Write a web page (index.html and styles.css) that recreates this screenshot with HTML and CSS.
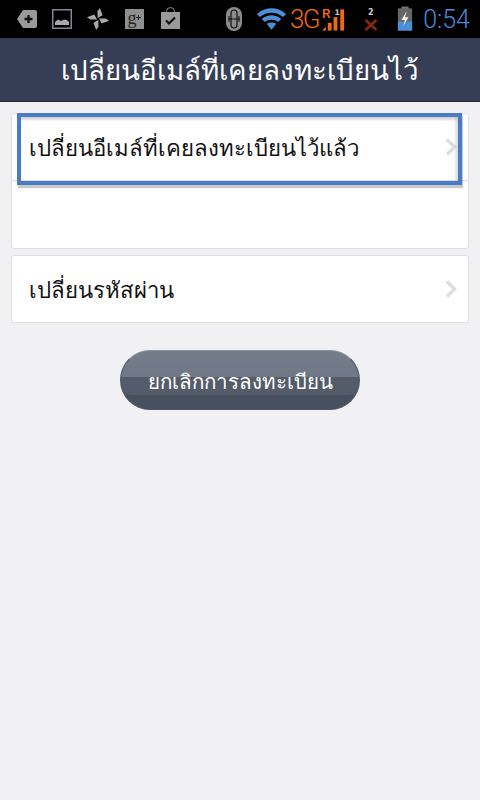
FILE: index.html
```html
<!DOCTYPE html>
<html lang="th">
<head>
<meta charset="utf-8">
<title>เปลี่ยนอีเมล์</title>
<link rel="stylesheet" href="styles.css">
</head>
<body>
<div class="status">
  <div class="status-left">
    <svg class="i" width="20" height="18" viewBox="0 0 20 18"><path d="M6 0h12a2 2 0 0 1 2 2v14a2 2 0 0 1-2 2H6L0 9z" fill="#9a9a9a"/><path d="M11.500 5v8M7.500 9h8" stroke="#111" stroke-width="2.400"/></svg>
    <svg class="i" width="20" height="20" viewBox="0 0 20 20"><rect x=".75" y=".75" width="18.500" height="18.500" fill="none" stroke="#7d8798" stroke-width="1.500"/><path d="M3 16v-3l3-2.500 3 1.500 3-1.500 3 .5 2 2v3z" fill="#a8a8a8"/></svg>
    <svg class="i pin" width="22" height="24" viewBox="0 0 24 24"><g fill="#a8a8a8"><path d="M11.500 11V3.500L14 0l3 8z"/><path d="M11.500 11V3.500L14 0l3 8z" transform="rotate(90 12 12)"/><path d="M11.500 11V3.500L14 0l3 8z" transform="rotate(180 12 12)"/><path d="M11.500 11V3.500L14 0l3 8z" transform="rotate(270 12 12)"/></g></svg>
    <svg class="i gp" width="19" height="20" viewBox="0 0 19 20"><rect width="19" height="20" fill="#8f8f8f"/><text x="2.500" y="15" class="gplus">g</text><path d="M13.500 6v5M11 8.500h5" stroke="#222" stroke-width="1"/></svg>
    <svg class="i bag" width="19" height="22" viewBox="0 0 19 22"><path d="M5.500 7V4.500a4 4 0 0 1 8 0V7" fill="none" stroke="#8a8a8a" stroke-width="1"/><rect y="5" width="19" height="17" fill="#9a9a9a"/><path d="M5 13.500l3 3 6-6" fill="none" stroke="#111" stroke-width="2.200"/></svg>
  </div>
  <div class="status-right">
    <svg class="i" width="18" height="26" viewBox="0 0 18 26"><rect x="1" y="1" width="16" height="24" rx="8" fill="#8c8c8c"/><rect x="6" y="4" width="6" height="18" rx="3" fill="none" stroke="#111" stroke-width="1.200"/><path d="M3 13h12M4 10v6M14 10v6" stroke="#111" stroke-width="1"/></svg>
    <svg class="i wifi" width="31" height="24" viewBox="0 0 32 24"><path d="M1 7C9-1 23-1 31 7l-3 3C21 4 11 4 4 10z" fill="#4a8fd8"/><path d="M6 12c6-5 14-5 20 0l-3 3c-4-3-10-3-14 0z" fill="#4a8fd8"/><path d="M11 17c3-2 7-2 10 0l-5 6z" fill="#4a8fd8"/></svg>
    <span class="net">3G</span>
    <svg class="i sig" width="25" height="26" viewBox="0 0 26 26"><text x="0" y="12" class="r">R</text><text x="13" y="9" class="one">1</text><g fill="#f26a0f"><path d="M0 25l4-4v4z"/><rect x="6" y="17" width="4" height="8"/><rect x="12" y="11" width="4" height="14"/><rect x="19" y="3" width="4" height="22"/></g></svg>
    <svg class="i alarm" width="14" height="26" viewBox="0 0 14 26"><text x="4" y="9" class="two">2</text><path d="M1.500 14l11 10M12.500 14L1.500 24" stroke="#8b2a0c" stroke-width="2.500"/></svg>
    <svg class="i batt" width="16" height="26" viewBox="0 0 18 28"><rect x="5" y="0" width="8" height="3" fill="#777"/><rect x="1" y="2" width="16" height="25" fill="#666"/><rect x="1" y="17" width="16" height="10" fill="#4a8fd8"/><path d="M11 5L5 15h4l-2 7 6-10H9z" fill="#f4f4f4"/></svg>
    <span class="clock">0:54</span>
  </div>
</div>
<header class="title"><h1>เปลี่ยนอีเมล์ที่เคยลงทะเบียนไว้</h1></header>
<main class="content">
  <section class="card first">
    <div class="row">
      <span>เปลี่ยนอีเมล์ที่เคยลงทะเบียนไว้แล้ว</span>
      <svg class="chev" width="12" height="18" viewBox="0 0 12 18"><path d="M2 1.500l7.500 7.500L2 16.500" fill="none" stroke="#dcdde0" stroke-width="3.500"/></svg>
    </div>
    <div class="empty"></div>
    <div class="focus"></div>
  </section>
  <section class="card">
    <div class="row">
      <span>เปลี่ยนรหัสผ่าน</span>
      <svg class="chev" width="12" height="18" viewBox="0 0 12 18"><path d="M2 1.500l7.500 7.500L2 16.500" fill="none" stroke="#dcdde0" stroke-width="3.500"/></svg>
    </div>
  </section>
  <button class="cancel">ยกเลิกการลงทะเบียน</button>
</main>
</body>
</html>
```
FILE: styles.css
```css
* { box-sizing: border-box; }
html, body { margin: 0; padding: 0; }
body {
  width: 480px;
  height: 800px;
  overflow: hidden;
  background: #f1f1f4;
  font-family: "Noto Sans", "DejaVu Sans", "Liberation Sans", sans-serif;
}
.status {
  height: 38px;
  background: #000;
  display: flex;
  justify-content: space-between;
  align-items: center;
  padding: 0 10px 0 17px;
}
.status-left { display: flex; align-items: center; gap: 15px; }
.gp { margin-left: 1px; }
.bag { margin-left: 2px; margin-top: -2px; }
.status-right { display: flex; align-items: center; }
.i { display: block; flex: none; }
.wifi { margin-left: 13px; }
.net {
  font: 300 26px/1 "Roboto", sans-serif;
  color: #f26a0f;
  margin-left: 3px;
  letter-spacing: -1.5px;
}
.sig { margin-left: 3px; }
.alarm { margin-left: 17px; }
.batt { margin-left: 19px; }
.clock {
  font: 300 25px/1 "Roboto", sans-serif;
  color: #4a8ad6;
  margin-left: 10px;
}
.r { font: 500 14px "Roboto", sans-serif; fill: #f26a0f; }
.one, .two { font: bold 8px "DejaVu Sans", sans-serif; fill: #ccc; }
.gplus { font: 18px "Liberation Serif", serif; fill: #222; }
.title {
  height: 64px;
  background: #353e55;
  border-bottom: 1px solid #272d3f;
  display: flex;
  align-items: center;
  justify-content: center;
}
.title h1 {
  margin: 0;
  font-size: 27.7px;
  font-weight: 400;
  color: #fff;
  white-space: nowrap;
}
.content {
  display: flex;
  flex-direction: column;
  padding: 11px 11px 0;
}
.card {
  position: relative;
  background: #fff;
  border: 1px solid #dfdfe1;
  border-radius: 3px;
  margin-bottom: 6px;
}
.row {
  height: 66px;
  display: flex;
  align-items: center;
  justify-content: space-between;
  padding: 1px 11px 0 17px;
  font-size: 22.2px;
  color: #111;
}
.chev { margin-top: -2px; }
.first .row { border-bottom: 1px solid #dfdfe1; height: 67px; }
.empty { height: 67px; }
.focus {
  position: absolute;
  left: 5px;
  top: -1px;
  width: 445px;
  height: 72px;
  border: 4px solid #4a7cc4;
  box-shadow: 1px 3px 1px rgba(120,120,120,.4), inset 0 3px 2px rgba(150,150,150,.35), inset -3px 0 2px rgba(150,150,150,.25);
  pointer-events: none;
}
.cancel {
  align-self: center;
  width: 240px;
  height: 60px;
  margin-top: 21px;
  border: 1px solid #4d5563;
  border-top-color: #8a909c;
  border-radius: 30px;
  background: linear-gradient(#747b8a 0, #707786 45%, #545c6a 45%, #545c6a 75%, #47505e 75%, #47505e 100%);
  color: #fff;
  font-family: inherit;
  font-size: 20.5px;
  padding: 2px 0 0;
}
```
